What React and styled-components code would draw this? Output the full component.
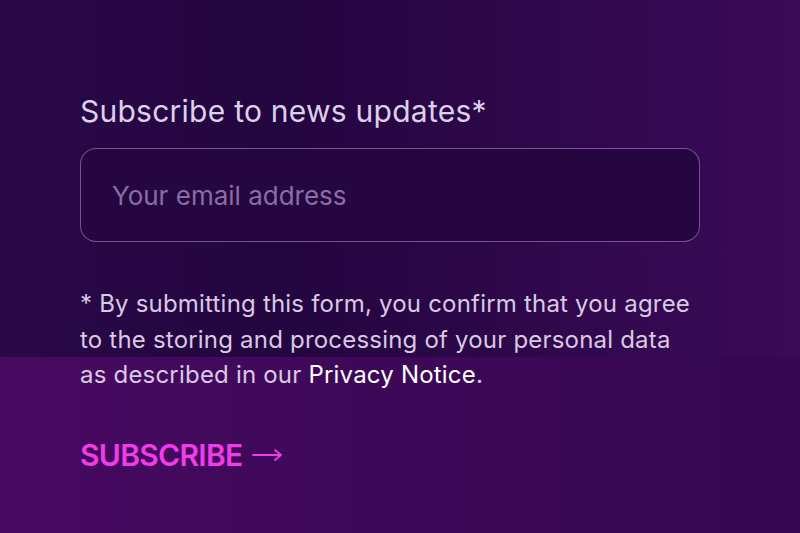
import React from 'react';
import styled, { createGlobalStyle } from 'styled-components';

const GlobalStyle = createGlobalStyle`
  html, body {
    margin: 0;
    padding: 0;
  }
  body {
    font-family: Inter, "Noto Sans", sans-serif;
    -webkit-font-smoothing: antialiased;
  }
`

const Page = styled.div`
  width: 800px;
  height: 533px;
  overflow: hidden;
  background:
    linear-gradient(90deg, #290847 0%, #23053f 35%, #2c0748 60%, #3b0a58 100%) top left / 100% 357px no-repeat,
    linear-gradient(90deg, #470a61 0%, #3d0858 50%, #340750 100%) bottom left / 100% 176px no-repeat;
  padding: 93px 80px 0;
  box-sizing: border-box;
`

const Form = styled.form`
  display: flex;
  flex-direction: column;
  width: 620px;
`

const Label = styled.label`
  font-size: 30px;
  line-height: 36px;
  letter-spacing: 0.25px;
  color: #ddd0ea;
  margin-bottom: 19px;
`

const EmailInput = styled.input`
  box-sizing: border-box;
  height: 94px;
  width: 100%;
  background: #250640;
  border: 1.5px solid rgba(180, 150, 210, 0.55);
  border-radius: 16px;
  padding: 0 31px;
  font-family: Inter, "Noto Sans", sans-serif;
  font-size: 26px;
  color: #fff;
  outline: none;

  &::placeholder {
    color: #8b6da5;
  }
`

const Notice = styled.p`
  margin: 44px 0 0;
  width: 614px;
  font-size: 24px;
  line-height: 35.5px;
  letter-spacing: 0.2px;
  color: #d9c9e3;
`

const NoticeLink = styled.a`
  color: #ffffff;
  text-decoration: none;
`

const SubmitButton = styled.button`
  align-self: flex-start;
  margin-top: 44px;
  padding: 0;
  background: none;
  border: none;
  font-family: Inter, "Noto Sans", sans-serif;
  font-size: 30px;
  line-height: 36px;
  font-weight: 600;
  letter-spacing: -0.7px;
  color: #f03be8;
  cursor: pointer;
  display: flex;
  align-items: center;
  gap: 9px;
`

const Arrow = () => (
  <svg width="31" height="14" viewBox="0 0 31 14" fill="none" stroke="#f03be8" strokeWidth="1.8" strokeLinecap="round" strokeLinejoin="round">
    <path d="M1 7h28M23 2l6 5-6 5" />
  </svg>
)

const App = () => {
  return (
    <Page>
      <GlobalStyle />
      <Form onSubmit={e => e.preventDefault()}>
        <Label htmlFor="email">Subscribe to news updates*</Label>
        <EmailInput id="email" type="email" placeholder="Your email address" />
        <Notice>
          * By submitting this form, you confirm that you agree to the storing and processing of your personal data as described in our <NoticeLink href="#">Privacy Notice</NoticeLink>.
        </Notice>
        <SubmitButton type="submit">
          SUBSCRIBE <Arrow />
        </SubmitButton>
      </Form>
    </Page>
  )
}

export default App
